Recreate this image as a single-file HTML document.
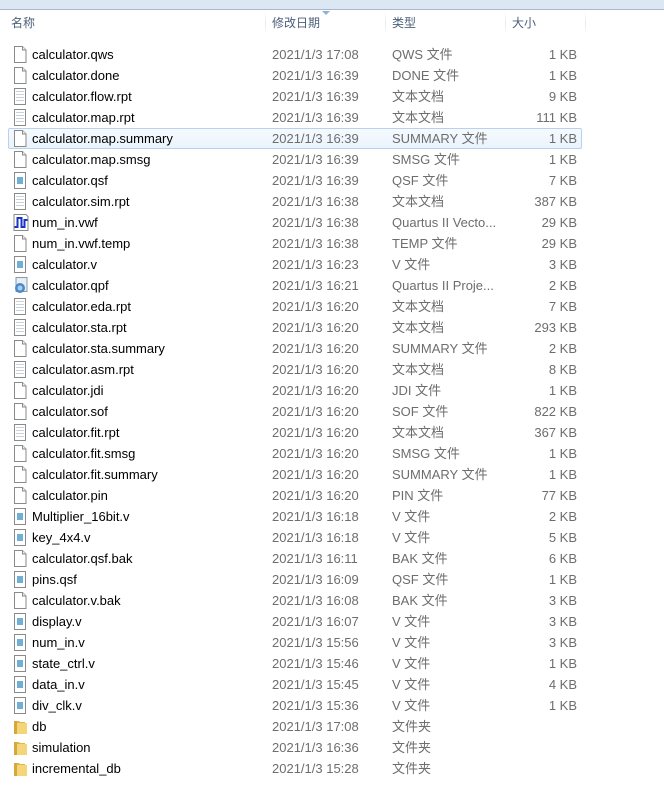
<!DOCTYPE html>
<html><head><meta charset="utf-8"><style>
*{margin:0;padding:0;box-sizing:border-box}
body{width:664px;height:794px;background:#fff;overflow:hidden;position:relative;font-family:"Liberation Sans","Noto Sans CJK SC",sans-serif;font-size:13px}
.top{position:absolute;left:0;top:0;width:664px;height:10px;background:#dce7f4;border-bottom:1px solid #a9b8cc}
.hd{position:absolute;top:11px;height:24px;color:#4c607a;line-height:24px;font-size:12px}
.dv{position:absolute;top:11px;width:1px;height:24px;background:linear-gradient(#fff,#e3e8ef,#fff)}
.r{position:absolute;left:0;width:664px;height:21px;line-height:22px}
.r span{position:absolute;top:0;white-space:nowrap}
.n{left:32px;color:#000}
.d{left:272px;color:#6d6d6d}
.t{left:392px;color:#6d6d6d}
.s{right:87px;color:#6d6d6d}
.r svg{position:absolute;left:13px;top:2px}
.sel{position:absolute;left:8px;top:128px;width:574px;height:21px;border:1px solid #b7d2ef;border-radius:2px;background:linear-gradient(#f6fafe,#eaf3fc)}
</style></head><body>
<div class="top"></div>
<div style="position:absolute;left:322px;top:11px;width:0;height:0;border-left:4px solid transparent;border-right:4px solid transparent;border-top:4px solid #8fb2d6"></div>
<div class="hd" style="left:11px">名称</div>
<div class="hd" style="left:272px">修改日期</div>
<div class="hd" style="left:392px">类型</div>
<div class="hd" style="left:512px">大小</div>
<div class="dv" style="left:265px"></div>
<div class="dv" style="left:385px"></div>
<div class="dv" style="left:505px"></div>
<div class="dv" style="left:585px"></div>
<div class="sel"></div>
<svg width="0" height="0" style="position:absolute"><defs>
<symbol id="f" viewBox="0 0 14 17"><path d="M1.5 .5h8l3.5 3.5v12.5h-11.5z" fill="#fff" stroke="#8a8a8a"/><path d="M9.5 .5v3.5h3.5" fill="#eee" stroke="#8a8a8a"/></symbol>
<symbol id="tx" viewBox="0 0 14 17"><path d="M1.5 .5h11v16h-11z" fill="#fff" stroke="#8a8a8a"/><path d="M3 3.5h8M3 6.5h8M3 9.5h8M3 12.5h8" stroke="#b8c4d0" stroke-width=".8"/></symbol>
<symbol id="v" viewBox="0 0 14 17"><path d="M1.5 .5h11v16h-11z" fill="#fff" stroke="#8a8a8a"/><rect x="4" y="5" width="6" height="7" fill="#6fb0d6"/></symbol>
<symbol id="w" viewBox="0 0 16 17"><path d="M1 .5h12l2 2v14H1z" fill="#fff" stroke="#888"/><path d="M1.5 13h3V4h4v9h3V6h3" fill="none" stroke="#1a34c8" stroke-width="2"/></symbol>
<symbol id="q" viewBox="0 0 16 17"><path d="M3 .5h11v14H3z" fill="#e8eef4" stroke="#8a98a8"/><circle cx="7" cy="11" r="5" fill="#4a8ac8"/><circle cx="7" cy="11" r="2.5" fill="#a8d0f0"/></symbol>
<symbol id="d" viewBox="0 0 16 17"><path d="M1 3h5l1 1h5v12H1z" fill="#e0b84a"/><path d="M4 5h10v11H4z" fill="#f3d67a"/><path d="M1 3h3v13H1z" fill="#d6a83a"/></symbol>
</defs></svg>
<div class="r" style="top:44px"><svg width="14" height="17"><use href="#f"/></svg><span class="n">calculator.qws</span><span class="d">2021/1/3 17:08</span><span class="t">QWS 文件</span><span class="s">1 KB</span></div>
<div class="r" style="top:65px"><svg width="14" height="17"><use href="#f"/></svg><span class="n">calculator.done</span><span class="d">2021/1/3 16:39</span><span class="t">DONE 文件</span><span class="s">1 KB</span></div>
<div class="r" style="top:86px"><svg width="14" height="17"><use href="#tx"/></svg><span class="n">calculator.flow.rpt</span><span class="d">2021/1/3 16:39</span><span class="t">文本文档</span><span class="s">9 KB</span></div>
<div class="r" style="top:107px"><svg width="14" height="17"><use href="#tx"/></svg><span class="n">calculator.map.rpt</span><span class="d">2021/1/3 16:39</span><span class="t">文本文档</span><span class="s">111 KB</span></div>
<div class="r" style="top:128px"><svg width="14" height="17"><use href="#f"/></svg><span class="n">calculator.map.summary</span><span class="d">2021/1/3 16:39</span><span class="t">SUMMARY 文件</span><span class="s">1 KB</span></div>
<div class="r" style="top:149px"><svg width="14" height="17"><use href="#f"/></svg><span class="n">calculator.map.smsg</span><span class="d">2021/1/3 16:39</span><span class="t">SMSG 文件</span><span class="s">1 KB</span></div>
<div class="r" style="top:170px"><svg width="14" height="17"><use href="#v"/></svg><span class="n">calculator.qsf</span><span class="d">2021/1/3 16:39</span><span class="t">QSF 文件</span><span class="s">7 KB</span></div>
<div class="r" style="top:191px"><svg width="14" height="17"><use href="#tx"/></svg><span class="n">calculator.sim.rpt</span><span class="d">2021/1/3 16:38</span><span class="t">文本文档</span><span class="s">387 KB</span></div>
<div class="r" style="top:212px"><svg width="16" height="17"><use href="#w"/></svg><span class="n">num_in.vwf</span><span class="d">2021/1/3 16:38</span><span class="t">Quartus II Vecto...</span><span class="s">29 KB</span></div>
<div class="r" style="top:233px"><svg width="14" height="17"><use href="#f"/></svg><span class="n">num_in.vwf.temp</span><span class="d">2021/1/3 16:38</span><span class="t">TEMP 文件</span><span class="s">29 KB</span></div>
<div class="r" style="top:254px"><svg width="14" height="17"><use href="#v"/></svg><span class="n">calculator.v</span><span class="d">2021/1/3 16:23</span><span class="t">V 文件</span><span class="s">3 KB</span></div>
<div class="r" style="top:275px"><svg width="16" height="17"><use href="#q"/></svg><span class="n">calculator.qpf</span><span class="d">2021/1/3 16:21</span><span class="t">Quartus II Proje...</span><span class="s">2 KB</span></div>
<div class="r" style="top:296px"><svg width="14" height="17"><use href="#tx"/></svg><span class="n">calculator.eda.rpt</span><span class="d">2021/1/3 16:20</span><span class="t">文本文档</span><span class="s">7 KB</span></div>
<div class="r" style="top:317px"><svg width="14" height="17"><use href="#tx"/></svg><span class="n">calculator.sta.rpt</span><span class="d">2021/1/3 16:20</span><span class="t">文本文档</span><span class="s">293 KB</span></div>
<div class="r" style="top:338px"><svg width="14" height="17"><use href="#f"/></svg><span class="n">calculator.sta.summary</span><span class="d">2021/1/3 16:20</span><span class="t">SUMMARY 文件</span><span class="s">2 KB</span></div>
<div class="r" style="top:359px"><svg width="14" height="17"><use href="#tx"/></svg><span class="n">calculator.asm.rpt</span><span class="d">2021/1/3 16:20</span><span class="t">文本文档</span><span class="s">8 KB</span></div>
<div class="r" style="top:380px"><svg width="14" height="17"><use href="#f"/></svg><span class="n">calculator.jdi</span><span class="d">2021/1/3 16:20</span><span class="t">JDI 文件</span><span class="s">1 KB</span></div>
<div class="r" style="top:401px"><svg width="14" height="17"><use href="#f"/></svg><span class="n">calculator.sof</span><span class="d">2021/1/3 16:20</span><span class="t">SOF 文件</span><span class="s">822 KB</span></div>
<div class="r" style="top:422px"><svg width="14" height="17"><use href="#tx"/></svg><span class="n">calculator.fit.rpt</span><span class="d">2021/1/3 16:20</span><span class="t">文本文档</span><span class="s">367 KB</span></div>
<div class="r" style="top:443px"><svg width="14" height="17"><use href="#f"/></svg><span class="n">calculator.fit.smsg</span><span class="d">2021/1/3 16:20</span><span class="t">SMSG 文件</span><span class="s">1 KB</span></div>
<div class="r" style="top:464px"><svg width="14" height="17"><use href="#f"/></svg><span class="n">calculator.fit.summary</span><span class="d">2021/1/3 16:20</span><span class="t">SUMMARY 文件</span><span class="s">1 KB</span></div>
<div class="r" style="top:485px"><svg width="14" height="17"><use href="#f"/></svg><span class="n">calculator.pin</span><span class="d">2021/1/3 16:20</span><span class="t">PIN 文件</span><span class="s">77 KB</span></div>
<div class="r" style="top:506px"><svg width="14" height="17"><use href="#v"/></svg><span class="n">Multiplier_16bit.v</span><span class="d">2021/1/3 16:18</span><span class="t">V 文件</span><span class="s">2 KB</span></div>
<div class="r" style="top:527px"><svg width="14" height="17"><use href="#v"/></svg><span class="n">key_4x4.v</span><span class="d">2021/1/3 16:18</span><span class="t">V 文件</span><span class="s">5 KB</span></div>
<div class="r" style="top:548px"><svg width="14" height="17"><use href="#f"/></svg><span class="n">calculator.qsf.bak</span><span class="d">2021/1/3 16:11</span><span class="t">BAK 文件</span><span class="s">6 KB</span></div>
<div class="r" style="top:569px"><svg width="14" height="17"><use href="#v"/></svg><span class="n">pins.qsf</span><span class="d">2021/1/3 16:09</span><span class="t">QSF 文件</span><span class="s">1 KB</span></div>
<div class="r" style="top:590px"><svg width="14" height="17"><use href="#f"/></svg><span class="n">calculator.v.bak</span><span class="d">2021/1/3 16:08</span><span class="t">BAK 文件</span><span class="s">3 KB</span></div>
<div class="r" style="top:611px"><svg width="14" height="17"><use href="#v"/></svg><span class="n">display.v</span><span class="d">2021/1/3 16:07</span><span class="t">V 文件</span><span class="s">3 KB</span></div>
<div class="r" style="top:632px"><svg width="14" height="17"><use href="#v"/></svg><span class="n">num_in.v</span><span class="d">2021/1/3 15:56</span><span class="t">V 文件</span><span class="s">3 KB</span></div>
<div class="r" style="top:653px"><svg width="14" height="17"><use href="#v"/></svg><span class="n">state_ctrl.v</span><span class="d">2021/1/3 15:46</span><span class="t">V 文件</span><span class="s">1 KB</span></div>
<div class="r" style="top:674px"><svg width="14" height="17"><use href="#v"/></svg><span class="n">data_in.v</span><span class="d">2021/1/3 15:45</span><span class="t">V 文件</span><span class="s">4 KB</span></div>
<div class="r" style="top:695px"><svg width="14" height="17"><use href="#v"/></svg><span class="n">div_clk.v</span><span class="d">2021/1/3 15:36</span><span class="t">V 文件</span><span class="s">1 KB</span></div>
<div class="r" style="top:716px"><svg width="16" height="17"><use href="#d"/></svg><span class="n">db</span><span class="d">2021/1/3 17:08</span><span class="t">文件夹</span></div>
<div class="r" style="top:737px"><svg width="16" height="17"><use href="#d"/></svg><span class="n">simulation</span><span class="d">2021/1/3 16:36</span><span class="t">文件夹</span></div>
<div class="r" style="top:758px"><svg width="16" height="17"><use href="#d"/></svg><span class="n">incremental_db</span><span class="d">2021/1/3 15:28</span><span class="t">文件夹</span></div>
</body></html>
